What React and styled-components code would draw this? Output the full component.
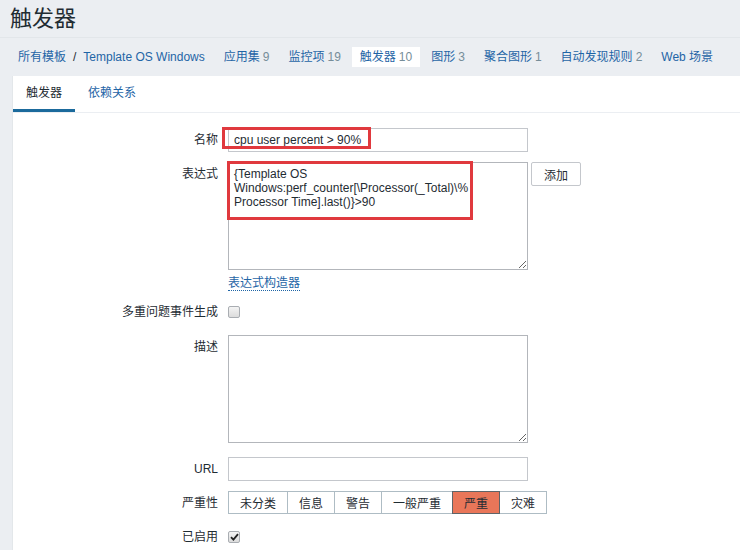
import React from 'react';
import styled, { createGlobalStyle } from 'styled-components';

const GlobalStyle = createGlobalStyle`
  html, body {
    margin: 0;
    padding: 0;
    background: #ebeef2;
    overflow: hidden;
  }
  body {
    font-family: Arial, "Liberation Sans", "Noto Sans CJK SC", sans-serif;
    font-size: 12px;
    color: #1f2c33;
  }
`;

const Page = styled.div`
  width: 740px;
  height: 550px;
  overflow: hidden;
`;

const Header = styled.div`
  height: 37px;
  box-sizing: border-box;
  padding: 7px 10px 0;
`;

const Title = styled.h1`
  margin: 0;
  font-size: 22px;
  font-weight: normal;
  line-height: 24px;
  color: #1f2c33;
`;

const Nav = styled.ul`
  list-style: none;
  margin: 0;
  height: 39px;
  box-sizing: border-box;
  padding: 0 10px;
  display: flex;
  align-items: center;
  gap: 3px;
  border-top: 1px solid #e2e6ea;
  white-space: nowrap;
`;

const NavItem = styled.li`
  padding: 3px 8px;
  line-height: 14px;
  background: ${p => (p.$active ? '#ffffff' : 'transparent')};
  color: #1f65a6;
`;

const Sep = styled.span`
  color: #1f2c33;
  margin: 0 7px;
`;

const Count = styled.span`
  color: #768d99;
  margin-left: 3px;
`;

const Panel = styled.div`
  margin-left: 12px;
  background: #ffffff;
  border-left: 1px solid #e3e7ea;
  height: 474px;
`;

const Tabs = styled.div`
  display: flex;
  height: 37px;
  box-sizing: border-box;
  border-bottom: 1px solid #ebeef2;
`;

const Tab = styled.div`
  padding: 10px 13px 0;
  line-height: 14px;
  box-sizing: border-box;
  height: 36px;
  color: ${p => (p.$active ? '#1f2c33' : '#1f65a6')};
  border-bottom: 3px solid ${p => (p.$active ? '#1b6a9c' : 'transparent')};
`;

const Form = styled.div`
  padding-top: 15px;
`;

const Row = styled.div`
  display: grid;
  grid-template-columns: 205px auto;
  column-gap: 10px;
  margin-top: ${p => p.$mt || 0}px;
  align-items: ${p => (p.$top ? 'start' : 'center')};
  height: ${p => (p.$h ? `${p.$h}px` : 'auto')};
`;

const Label = styled.div`
  text-align: right;
  line-height: 14px;
  padding-top: ${p => (p.$top ? 5 : 0)}px;
  white-space: nowrap;
`;

const Field = styled.div`
  position: relative;
  display: flex;
  flex-direction: ${p => (p.$column ? 'column' : 'row')};
  align-items: flex-start;
  gap: ${p => (p.$column ? 0 : 3)}px;
`;

const TextInput = styled.input`
  width: 300px;
  height: 24px;
  box-sizing: border-box;
  border: 1px solid #c4c7cc;
  padding: 0 5px;
  font: inherit;
  color: #1f2c33;
  outline: none;
`;

const TextArea = styled.textarea`
  display: block;
  width: 300px;
  height: 108px;
  box-sizing: border-box;
  border: 1px solid #b3b6bb;
  padding: 4px 5px;
  font: inherit;
  line-height: 14px;
  color: #1f2c33;
  outline: none;
  margin: 0;
`;

const Button = styled.button`
  height: 24px;
  padding: 0 12px;
  background: #ffffff;
  border: 1px solid #c4c7cc;
  border-radius: 2px;
  font: inherit;
  color: #1f2c33;
`;

const BuilderLink = styled.span`
  margin-top: 6px;
  line-height: 14px;
  color: #1f65a6;
  border-bottom: 1px dotted #1f65a6;
`;

const CheckBox = styled.span`
  width: 12px;
  height: 12px;
  box-sizing: border-box;
  border: 1px solid #a9adb2;
  border-radius: 2px;
  background: linear-gradient(#f4f4f4, #dcdcdc);
  display: flex;
  align-items: center;
  justify-content: center;
`;

const Segments = styled.div`
  display: flex;
  height: 23px;
`;

const Segment = styled.span`
  display: flex;
  align-items: center;
  padding: 0 11px;
  border: 1px solid #aebcc4;
  margin-left: -1px;
  background: ${p => (p.$selected ? '#e97659' : '#ffffff')};
  border-color: ${p => (p.$selected ? '#5f6468' : '#aebcc4')};
  position: ${p => (p.$selected ? 'relative' : 'static')};
  &:first-child { margin-left: 0; }
`;

const Highlight = styled.div`
  position: absolute;
  left: ${p => p.$x}px;
  top: ${p => p.$y}px;
  width: ${p => p.$w}px;
  height: ${p => p.$h}px;
  border: 3px solid #e0393e;
  box-sizing: border-box;
  pointer-events: none;
`;

const navItems = [
  { name: '应用集', count: 9 },
  { name: '监控项', count: 19 },
  { name: '触发器', count: 10, active: true },
  { name: '图形', count: 3 },
  { name: '聚合图形', count: 1 },
  { name: '自动发现规则', count: 2 },
  { name: 'Web 场景' },
];

const severities = ['未分类', '信息', '警告', '一般严重', '严重', '灾难'];

const expression =
  '{Template OS Windows:perf_counter[\\Processor(_Total)\\% Processor Time].last()}>90';

function Check() {
  return (
    <svg width="9" height="8" viewBox="0 0 9 8">
      <path d="M1 4.2 L3.4 6.6 L8 1.2" fill="none" stroke="#222" strokeWidth="1.8" />
    </svg>
  );
}

export default function App() {
  return (
    <Page>
      <GlobalStyle />
      <Header>
        <Title>触发器</Title>
      </Header>
      <Nav>
        <NavItem>
          所有模板<Sep>/</Sep>Template OS Windows
        </NavItem>
        {navItems.map(item => (
          <NavItem key={item.name} $active={item.active}>
            {item.name}
            {item.count !== undefined && <Count>{item.count}</Count>}
          </NavItem>
        ))}
      </Nav>
      <Panel>
        <Tabs>
          <Tab $active>触发器</Tab>
          <Tab>依赖关系</Tab>
        </Tabs>
        <Form>
          <Row>
            <Label>名称</Label>
            <Field>
              <TextInput defaultValue="cpu user percent > 90%" />
              <Highlight $x={-6} $y={-1} $w={149} $h={22} />
            </Field>
          </Row>
          <Row $mt={10} $top>
            <Label $top>表达式</Label>
            <Field $column>
              <Field>
                <TextArea defaultValue={expression} />
                <Button>添加</Button>
                <Highlight $x={-1} $y={-1} $w={246} $h={59} />
              </Field>
              <BuilderLink>表达式构造器</BuilderLink>
            </Field>
          </Row>
          <Row $mt={14} $h={13}>
            <Label>多重问题事件生成</Label>
            <Field>
              <CheckBox />
            </Field>
          </Row>
          <Row $mt={17} $top>
            <Label $top>描述</Label>
            <Field>
              <TextArea />
            </Field>
          </Row>
          <Row $mt={14}>
            <Label>URL</Label>
            <Field>
              <TextInput />
            </Field>
          </Row>
          <Row $mt={10}>
            <Label>严重性</Label>
            <Field>
              <Segments>
                {severities.map(s => (
                  <Segment key={s} $selected={s === '严重'}>
                    {s}
                  </Segment>
                ))}
              </Segments>
            </Field>
          </Row>
          <Row $mt={16} $h={13}>
            <Label>已启用</Label>
            <Field>
              <CheckBox>
                <Check />
              </CheckBox>
            </Field>
          </Row>
        </Form>
      </Panel>
    </Page>
  );
}
